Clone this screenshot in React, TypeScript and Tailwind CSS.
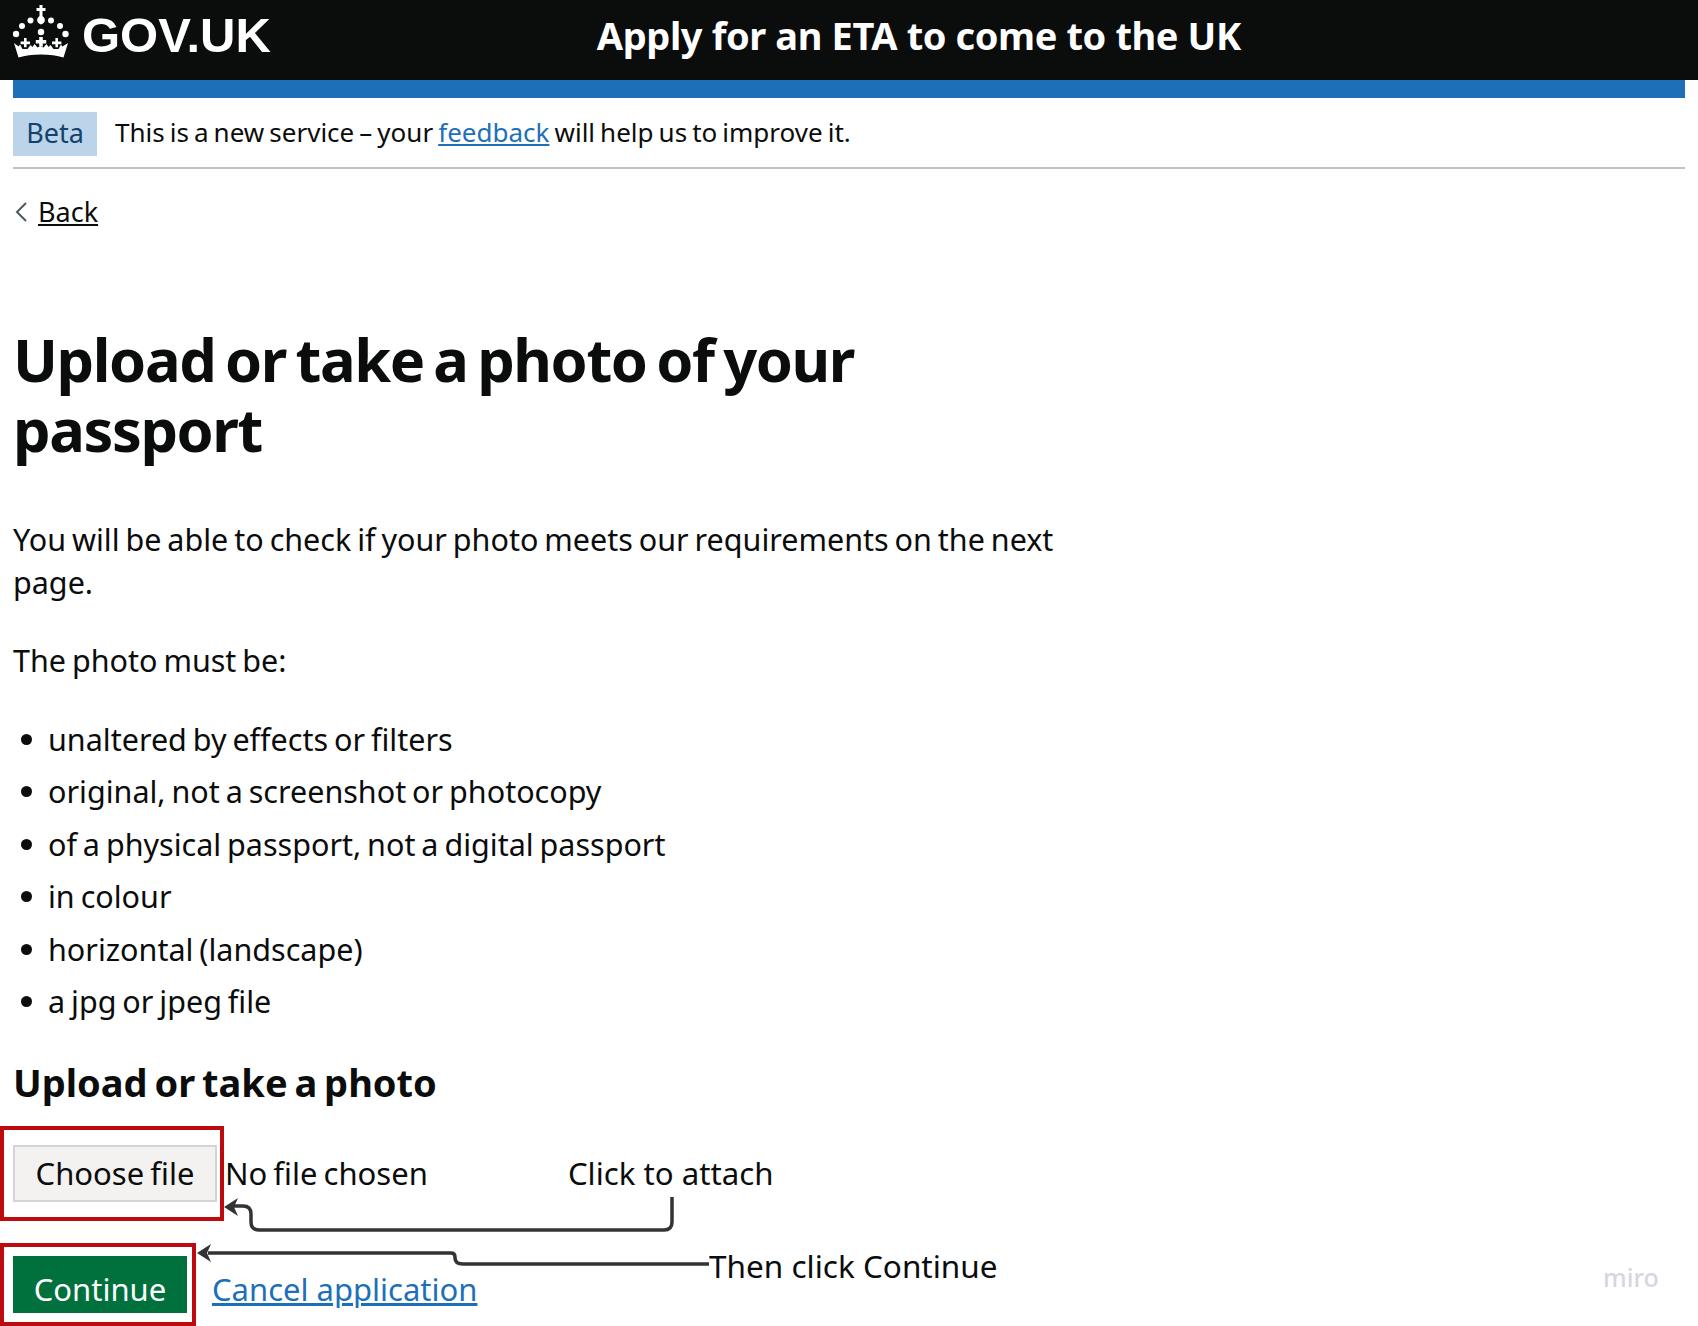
import React from "react";

const bullets = [
  "unaltered by effects or filters",
  "original, not a screenshot or photocopy",
  "of a physical passport, not a digital passport",
  "in colour",
  "horizontal (landscape)",
  "a jpg or jpeg file",
];

const Crown = () => (
  <svg width="56" height="60" viewBox="13 5 56 60" fill="white" className="shrink-0">
    <path d="M39.500 5h3v3h3v3h-3v5c1.800 1.500 2.600 3.200 2.300 4.800-.3 1.700-1.600 3-3.800 3.700-2.200-.7-3.500-2-3.800-3.700-.3-1.600.5-3.300 2.300-4.800v-5h-3V8h3z" />
    <circle cx="30.500" cy="20.500" r="3" />
    <circle cx="51" cy="20.500" r="3" />
    <circle cx="22" cy="26" r="3" />
    <circle cx="60" cy="26" r="3" />
    <circle cx="16" cy="34" r="3.200" />
    <circle cx="65.500" cy="34" r="3.200" />
    <circle cx="41" cy="32" r="3.200" />
    <path d="M39.200 37h3.600v3h3.400v3.500h-3.400v3h-3.600v-3h-3.400V40h3.400z" />
    <path d="M24 38h2.600v3.500H30v2.800h-3.400v3H24v-3h-3.400v-2.800H24z" />
    <path d="M55.400 38H58v3.500h3.400v2.800H58v3h-2.600v-3H52v-2.800h3.400z" />
    <path d="M14 43l4.500 3.500 1.500-2 2.500 4.500h5l3-4 2 2 2-3 3 3.500 3-1.500 3 1.500 3-3.500 2 3 2-2 3 4h5l2.500-4.500 1.500 2L68 43l-4.500 14.500C57 55.500 49.500 54.500 41 54.500s-16 1-22.500 3z" />
  </svg>
);

export default function App() {
  return (
    <div className="relative h-[1326px] w-[1698px] overflow-hidden bg-white font-['Noto_Sans',sans-serif] text-[#0b0c0c]">
      <header className="flex h-[80px] items-center bg-[#0b0c0c] pb-[10px] pl-[13px] text-white">
        <Crown />
        <span className="ml-[13px] font-['Liberation_Sans',sans-serif] text-[49px] font-bold leading-none">GOV.UK</span>
        <span className="ml-[326px] text-[38px] font-bold leading-none tracking-[-0.4px]">Apply for an ETA to come to the UK</span>
      </header>

      <div className="px-[13px]">
        <div className="h-[18px] bg-[#1d70b8]" />
        <div className="flex h-[71px] items-start border-b-2 border-[#bfc1c3] pt-[14px]">
          <strong className="flex h-[44px] w-[84px] items-center justify-center bg-[#bbd4ea] pb-[2px] text-[27px] font-normal text-[#12436d]">Beta</strong>
          <p className="ml-[18px] text-[26px] leading-[40px] [word-spacing:-1.700px]">
            This is a new service – your <a className="text-[#1d70b8] underline" href="#">feedback</a> will help us to improve it.
          </p>
        </div>

        <a className="mt-[22px] flex items-center text-[27px] leading-[42px] underline" href="#">
          <svg width="14" height="22" viewBox="0 0 14 22" fill="none" stroke="#505a5f" strokeWidth="2" className="ml-[1px] mr-[10px]">
            <path d="M12 2 3 11l9 9" />
          </svg>
          Back
        </a>

        <h1 className="mt-[91px] w-[1000px] text-[59.500px] font-bold leading-[70px] tracking-[-1.400px] [word-spacing:-4.500px]">Upload or take a photo of your passport</h1>

        <p className="mt-[54px] w-[1060px] text-[30.500px] leading-[43px] [word-spacing:-2px]">You will be able to check if your photo meets our requirements on the next page.</p>
        <p className="mt-[35px] text-[30.500px] leading-[43px] [word-spacing:-2px]">The photo must be:</p>

        <ul className="mt-[36px] flex flex-col gap-[9.400px]">
          {bullets.map((item) => (
            <li key={item} className="flex items-center text-[30.500px] leading-[43px] [word-spacing:-2px]">
              <span className="ml-[8px] mr-[16px] h-[11px] w-[11px] rounded-full bg-[#0b0c0c]" />
              {item}
            </li>
          ))}
        </ul>

        <h2 className="mt-[35px] text-[38px] font-bold leading-[48px] [word-spacing:-3px]">Upload or take a photo</h2>
      </div>

      <div className="mt-[20px] flex items-center">
        <div className="box-border flex h-[95px] w-[224px] items-center border-[4px] border-[#bd0a0f] pl-[9px]">
          <button className="h-[57px] w-[204px] border-2 border-[#d4d4d4] bg-[#f3f2f1] text-[31px] [word-spacing:-2px]">Choose file</button>
        </div>
        <span className="ml-[1px] text-[31px] [word-spacing:-2px]">No file chosen</span>
        <span className="ml-[140px] text-[31.200px] leading-[50px]">Click to attach</span>
      </div>

      <div className="mt-[22px] flex items-start">
        <div className="box-border h-[83px] w-[196px] border-[4px] border-[#bd0a0f] pl-[9px] pt-[9px]">
          <button className="h-[57px] w-[174px] bg-[#00703c] pt-[10px] text-[31px] leading-[40px] text-white">Continue</button>
        </div>
        <a className="ml-[16px] mt-[25px] text-[31px] leading-[43px] text-[#1d70b8] underline" href="#">Cancel application</a>
      </div>

      <span className="absolute left-[709px] top-[1244px] text-[31.500px] leading-[43px]">Then click Continue</span>
      <span className="absolute left-[1603px] top-[1262px] text-[25px] font-medium leading-[30px] text-[#d6d6e0]">miro</span>

      {/* arrows sit over the page */}
      <svg className="absolute left-0 top-0" width="1698" height="1326" fill="none">
        <g stroke="#333" strokeWidth="3.500">
          <path d="M672 1197v25q0 8-8 8H259q-8 0-8-8v-8q0-8-8-8h-10" />
          <path d="M709 1264H463q-8 0-8-6v-1q0-4-4-4H208" />
        </g>
        <path d="M238 1198l-4 9 4 9-14-9z" fill="#333" />
        <path d="M211 1244l-4 9 4 9-14-9z" fill="#333" />
      </svg>
    </div>
  );
}
